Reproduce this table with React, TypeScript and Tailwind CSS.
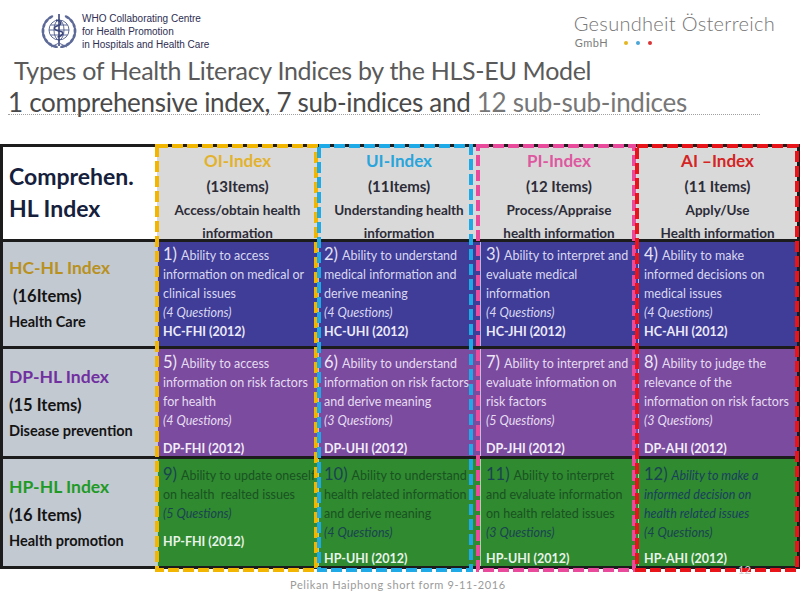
import React from 'react';

type Cell = {
  n: string;
  lines: string[];
  q: string;
  code: string;
  italic?: boolean;
  codeClass?: string;
};

const heads = [
  { title: 'OI-Index', items: '(13Items)', l1: 'Access/obtain health', l2: 'information', color: 'text-[#e3b22c]' },
  { title: 'UI-Index', items: '(11Items)', l1: 'Understanding health', l2: 'information', color: 'text-[#29a5dc]' },
  { title: 'PI-Index', items: '(12 Items)', l1: 'Process/Appraise', l2: 'health information', color: 'text-[#de58a0]' },
  { title: 'AI –Index', items: '(11 Items)', l1: 'Apply/Use', l2: 'Health information', color: 'text-[#d42424]' },
];

const rows = [
  {
    label: 'HC-HL Index',
    labelColor: 'text-[#b8911f]',
    items: '\u00a0(16Items)',
    sub: 'Health Care',
    bg: 'bg-[#3f3d98]',
    text: 'text-[#d9d7ef]',
    num: 'text-[#e4e2f5]',
    qc: 'text-[#d9d7ef]',
    code: 'text-[#eceaf8]',
    edge: 'border-[#b9b7de]',
    pt: 'pt-[3px]',
    cells: [
      { n: '1)', lines: ['Ability to access', 'information on medical or', 'clinical issues'], q: '(4 Questions)', code: 'HC-FHI (2012)' },
      { n: '2)', lines: ['Ability to understand', 'medical information and', 'derive meaning'], q: '(4 Questions)', code: 'HC-UHI (2012)' },
      { n: '3)', lines: ['Ability to interpret and', 'evaluate medical', 'information'], q: '(4 Questions)', code: 'HC-JHI (2012)' },
      { n: '4)', lines: ['Ability to make', 'informed decisions on', 'medical issues'], q: '(4 Questions)', code: 'HC-AHI (2012)' },
    ] as Cell[],
  },
  {
    label: 'DP-HL Index',
    labelColor: 'text-[#7030a0]',
    items: '(15 Items)',
    sub: 'Disease prevention',
    bg: 'bg-[#7a4b9f]',
    text: 'text-[#e6dcf0]',
    num: 'text-[#eee6f6]',
    qc: 'text-[#e6dcf0]',
    code: 'text-[#f2ecf8]',
    edge: 'border-[#cdb9de]',
    pt: 'pt-[4px]',
    cells: [
      { n: '5)', lines: ['Ability to access', 'information on risk factors', 'for health'], q: '(4 Questions)', code: 'DP-FHI (2012)', codeClass: 'mt-auto leading-[15px]' },
      { n: '6)', lines: ['Ability to understand', 'information on risk factors', 'and derive meaning'], q: '(3 Questions)', code: 'DP-UHI (2012)', codeClass: 'mt-auto leading-[15px]' },
      { n: '7)', lines: ['Ability to interpret and', 'evaluate information on', 'risk factors'], q: '(5 Questions)', code: 'DP-JHI (2012)', codeClass: 'mt-auto leading-[15px]' },
      { n: '8)', lines: ['Ability to judge the', 'relevance of the', 'information on risk factors'], q: '(3 Questions)', code: 'DP-AHI (2012)', codeClass: 'mt-auto leading-[15px]' },
    ] as Cell[],
  },
  {
    label: 'HP-HL Index',
    labelColor: 'text-[#1f9a27]',
    items: '(16 Items)',
    sub: 'Health promotion',
    bg: 'bg-[#2f8a30]',
    text: 'text-[#1a5222]',
    num: 'text-[#1a4452]',
    qc: 'text-[#1b4352]',
    code: 'text-[#e8f3e8]',
    edge: 'border-[#a9d3a9]',
    pt: 'pt-[6px]',
    cells: [
      { n: '9)', lines: ['Ability to update oneself', 'on health\u00a0 realted issues'], q: '(5 Questions)', code: 'HP-FHI (2012)', codeClass: 'mt-[11px] leading-[15px]' },
      { n: '10)', lines: ['Ability to understand', 'health related information', 'and derive meaning'], q: '(4 Questions)', code: 'HP-UHI (2012)', codeClass: 'mt-auto leading-[15px]' },
      { n: '11)', lines: ['Ability to interpret', 'and evaluate information', 'on health related issues'], q: '(3 Questions)', code: 'HP-UHI (2012)', codeClass: 'mt-auto leading-[15px]' },
      { n: '12)', lines: ['Ability to make a', 'informed decision on', 'health related issues'], q: '(4 Questions)', code: 'HP-AHI (2012)', codeClass: 'mt-auto leading-[15px]', italic: true },
    ] as Cell[],
  },
];

function WhoEmblem() {
  // laurel leaves placed round the globe
  const leaves: { x: number; y: number; r: number }[] = [];
  for (let i = 0; i < 8; i++) {
    const a = ((105 + i * 19) * Math.PI) / 180;
    const x = 20 + Math.cos(a) * 16;
    const y = 20 + Math.sin(a) * 16;
    const r = (105 + i * 19) + 90;
    leaves.push({ x, y, r });
    leaves.push({ x: 40 - x, y, r: 180 - r });
  }
  return (
    <svg width="40" height="40" viewBox="0 0 40 40" className="shrink-0">
      <g fill="none" stroke="#4d5b8c" strokeWidth="0.9">
        <circle cx="20" cy="19" r="10" />
        <ellipse cx="20" cy="19" rx="5" ry="10" />
        <line x1="10" y1="19" x2="30" y2="19" />
        <path d="M11.5 14 H28.5 M11.5 24 H28.5" />
      </g>
      {leaves.map((l, i) => (
        <ellipse
          key={i}
          cx={l.x}
          cy={l.y}
          rx="3.2"
          ry="1.4"
          fill="#5d6a98"
          transform={`rotate(${l.r} ${l.x} ${l.y})`}
        />
      ))}
      <line x1="20" y1="3" x2="20" y2="35" stroke="#3b467a" strokeWidth="1.6" />
      <path
        d="M17 9 C23 10.5 23.5 13.5 18 15 C13.5 16.5 15 19.5 22 20.5 C25.5 21.5 23.5 25 18.5 26"
        fill="none"
        stroke="#3b467a"
        strokeWidth="1.6"
      />
      <path d="M12 36 L20 32 L28 36" fill="none" stroke="#5d6a98" strokeWidth="1" />
    </svg>
  );
}

function DataCell({ c, r }: { c: Cell; r: (typeof rows)[number] }) {
  return (
    <div className={`flex flex-col pl-[5px] border-l ${r.edge} ${r.bg} ${r.pt} text-[12.5px] leading-[19px]`}>
      {c.lines.map((line, i) => (
        <div key={i} className={`whitespace-nowrap ${c.italic ? `italic text-[#1a3f5e]` : r.text}`}>
          {i === 0 && <span className={`text-[16.5px] not-italic mr-[4px] ${r.num}`}>{c.n}</span>}
          {line}
        </div>
      ))}
      <div className={`italic whitespace-nowrap ${r.qc}`}>{c.q}</div>
      <div className={`font-bold whitespace-nowrap ${r.code} ${c.codeClass ?? ''}`}>{c.code}</div>
    </div>
  );
}

export default function App() {
  return (
    <div className="w-[800px] h-[600px] bg-white overflow-hidden relative font-['Lato',sans-serif]">
      {/* Logos */}
      <div className="h-[54px] flex justify-between items-start">
        <div className="flex items-start gap-[3px] pl-[39px] pt-[11px]">
          <WhoEmblem />
          <div className="pt-[1px] font-['Liberation_Sans',Arial,sans-serif] text-[10px] leading-[13px] text-[#2e2e52]">
            <div>WHO Collaborating Centre</div>
            <div>for Health Promotion</div>
            <div>in Hospitals and Health Care</div>
          </div>
        </div>
        <div className="pr-[25px] pt-[11px]">
          <div className="text-[20px] leading-[24px] font-light text-[#767676] tracking-[0.3px]">Gesundheit Österreich</div>
          <div className="flex items-center gap-[8px] mt-[1px] pl-[1px]">
            <span className="text-[11px] leading-[14px] text-[#7c7c7c] tracking-[0.5px] mr-[8px]">GmbH</span>
            <span className="w-[4px] h-[4px] rounded-full bg-[#e6b620]" />
            <span className="w-[4px] h-[4px] rounded-full bg-[#4aa6d6]" />
            <span className="w-[4px] h-[4px] rounded-full bg-[#d93434]" />
          </div>
        </div>
      </div>

      {/* Titles */}
      <div className="pl-[14px] h-[32px] text-[25px] leading-[32px] text-[#5a5a5a] tracking-[-0.3px] whitespace-nowrap">
        Types of Health Literacy Indices by the HLS-EU Model
      </div>
      <div className="ml-[8px] mt-[3px] w-[752px] h-[26px] leading-[26px] text-[26px] tracking-[-0.3px] text-[#4a4a4a] border-b border-dotted border-[#a0a0a0] whitespace-nowrap">
        1 comprehensive index, 7 sub-indices and <span className="text-[#777777]">12 sub-sub-indices</span>
      </div>

      {/* Table */}
      <div className="relative mt-[29px]">
        <div className="grid grid-cols-[154px_161px_162px_158px_159px] grid-rows-[92px_104px_107px_107px] gap-y-[3px] bg-[#1c1c1c] border-[3px] border-[#1c1c1c]">
          <div className="bg-white flex flex-col justify-center pl-[6px] pb-[2px] text-[23px] leading-[32px] font-bold text-[#15203c]">
            <div>Comprehen.</div>
            <div>HL Index</div>
          </div>
          {heads.map((h) => (
            <div key={h.title} className="bg-[#d9d9d9] flex flex-col items-center pt-[1px] font-bold text-[#2c2c38] whitespace-nowrap">
              <div className={`text-[17px] leading-[26px] ${h.color}`}>{h.title}</div>
              <div className="text-[15px] leading-[25px]">{h.items}</div>
              <div className="text-[13.5px] leading-[23px]">{h.l1}</div>
              <div className="text-[13.5px] leading-[23px]">{h.l2}</div>
            </div>
          ))}
          {rows.map((r) => (
            <React.Fragment key={r.label}>
              <div className="bg-[#c3c9d1] flex flex-col justify-center pl-[6px] font-bold text-[#141414] whitespace-nowrap">
                <div className={`text-[17.5px] leading-[28px] ${r.labelColor}`}>{r.label}</div>
                <div className="text-[16.5px] leading-[28px]">{r.items}</div>
                <div className="text-[14.5px] leading-[24px]">{r.sub}</div>
              </div>
              {r.cells.map((c) => (
                <DataCell key={c.n} c={c} r={r} />
              ))}
            </React.Fragment>
          ))}
        </div>

        {/* dashed column frames */}
        <svg className="absolute left-0 top-0 overflow-visible pointer-events-none" width="800" height="430" viewBox="0 0 800 430">
          <g fill="none" strokeWidth="4" strokeDasharray="11 4">
            <rect x="157" y="2" width="159" height="424" stroke="#f2b600" />
            <rect x="319" y="2" width="152" height="424" stroke="#1eaae6" />
            <rect x="478" y="2" width="156" height="424" stroke="#ea4a9c" />
            <rect x="637" y="2" width="160" height="424" stroke="#e8141a" />
          </g>
        </svg>
        <div className="absolute left-[738px] top-[418px] text-[11px] text-[#d0d0d0]">12</div>
      </div>

      {/* Footer */}
      <div className="ml-[290px] mt-[9px] text-[11px] leading-[13px] tracking-[0.6px] text-[#9a9a9a]">
        Pelikan Haiphong short form 9-11-2016
      </div>
    </div>
  );
}
